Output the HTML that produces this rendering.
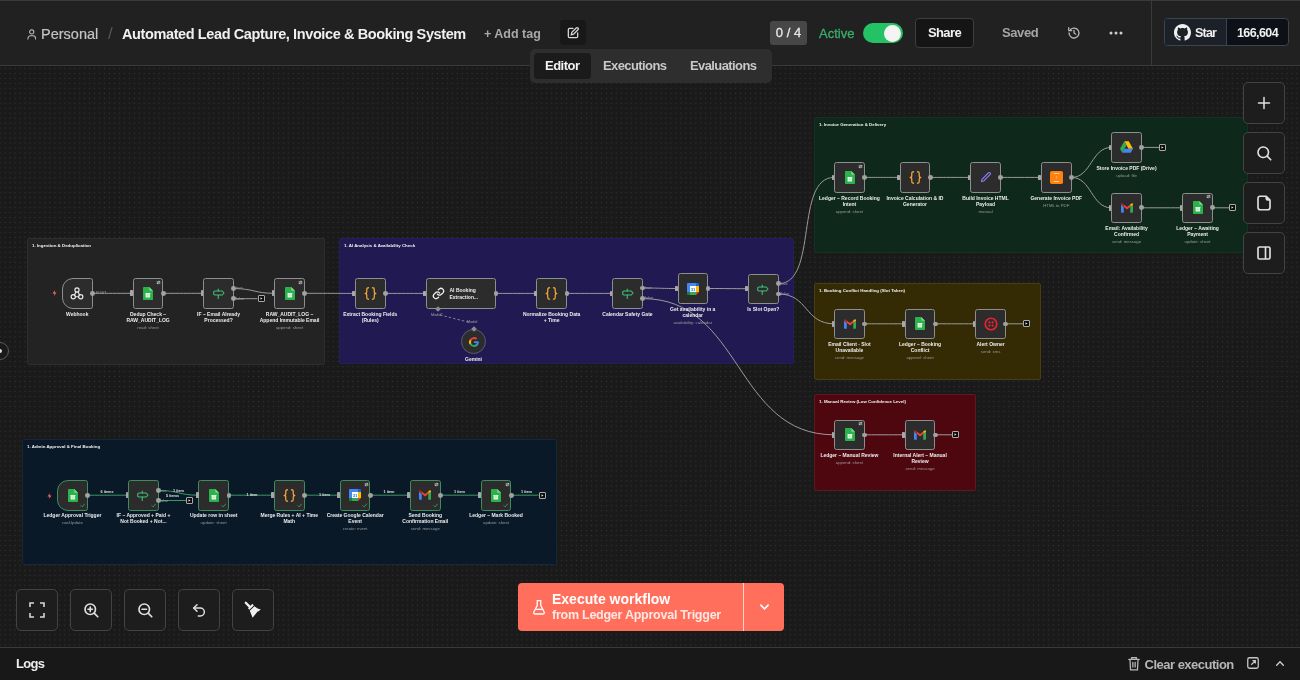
<!DOCTYPE html><html><head><meta charset="utf-8"><style>
*{box-sizing:border-box;margin:0;padding:0}
html,body{width:1300px;height:680px;overflow:hidden;background:#1e1e1e;font-family:'Liberation Sans', sans-serif;color:#e6e6e6}
#root{position:absolute;left:0;top:0;width:1300px;height:680px;will-change:transform}
.abs{position:absolute}
#canvas{position:absolute;left:0;top:66px;width:1300px;height:581px;background-color:#1a1a1a;
 background-image:radial-gradient(circle at 50% 50%,#323232 0,#2e2e2e 0.5px,transparent 1.05px);background-size:4.97px 4.97px;background-position:2.645px 0px}
.grp{position:absolute;border-radius:2px}
.gt{position:absolute;font:bold 4.4px/5px 'Liberation Sans', sans-serif;color:#f2f2f2;white-space:nowrap}
.node{position:absolute;background:#2c2c2c;border:1.2px solid #8e8e8e;border-radius:2.5px}
.node.ok{border-color:#3d8d5e}
.lbl{position:absolute;font:bold 5px/6px 'Liberation Sans', sans-serif;color:#ececec;text-align:center;white-space:nowrap}
.sub{position:absolute;font:4.3px/5px 'Liberation Sans', sans-serif;color:#9a9a9a;text-align:center;white-space:nowrap}
.elab{position:absolute;font:3.8px/4px 'Liberation Sans', sans-serif;color:#a0a0a0;white-space:nowrap}
.btn{position:absolute;width:42px;height:42px;background:#1d1d1d;border:1px solid #434343;border-radius:5px}
</style></head><body><div id="root">
<div class="abs" style="left:0;top:0;width:1300px;height:65px;background:#212121;border-top:1px solid #3a3a3a"></div>
<div class="abs" style="left:0;top:65px;width:1300px;height:1px;background:#3a3a3a"></div>
<div class="abs" style="left:1151px;top:0;width:1px;height:65px;background:#3a3a3a"></div>

<div id="canvas"></div>
<div class="grp" style="left:27px;top:238px;width:298px;height:127px;background:#232323;border:1px solid #2e2e2e"></div>
<div class="gt" style="left:32px;top:242.5px">1. Ingestion &amp; Deduplication</div>
<div class="grp" style="left:339px;top:238px;width:455px;height:126px;background:#211a52;border:1px solid #261e5c"></div>
<div class="gt" style="left:344px;top:242.5px">1. AI Analysis &amp; Availability Check</div>
<div class="grp" style="left:814px;top:117px;width:434px;height:136px;background:#0e291b;border:1px solid #12331f"></div>
<div class="gt" style="left:819px;top:121.5px">1. Invoice Generation &amp; Delivery</div>
<div class="grp" style="left:814px;top:283px;width:227px;height:97px;background:#342a04;border:1px solid #4a3d12"></div>
<div class="gt" style="left:819px;top:287.5px">1. Booking Conflict Handling (Slot Taken)</div>
<div class="grp" style="left:814px;top:394px;width:162px;height:97px;background:#4f070f;border:1px solid #5c1a20"></div>
<div class="gt" style="left:819px;top:398.5px">1. Manual Review (Low Confidence Level)</div>
<div class="grp" style="left:22px;top:439px;width:535px;height:126px;background:#0a1928;border:1px solid #172638"></div>
<div class="gt" style="left:27px;top:443.5px">1. Admin Approval &amp; Final Booking</div>
<svg class="abs" style="left:0;top:0" width="1300" height="680"><path d="M92.5,293.3 C112.65,293.3 112.65,293.3 132.8,293.3" stroke="#9a9a9a" stroke-width="1.0" fill="none"/><path d="M163.3,293.3 C183.3,293.3 183.3,293.3 203.3,293.3" stroke="#9a9a9a" stroke-width="1.0" fill="none"/><path d="M233.8,288.6 C254.05,288.6 254.05,293.3 274.3,293.3" stroke="#9a9a9a" stroke-width="1.0" fill="none"/><path d="M233.8,298.7 L257.5,298.7" stroke="#9a9a9a" stroke-width="1.0" fill="none"/><path d="M304.8,293.3 C329.9,293.3 329.9,293.4 355,293.4" stroke="#9a9a9a" stroke-width="1.0" fill="none"/><path d="M385.5,293.4 C405.5,293.4 405.5,293.4 425.5,293.4" stroke="#9a9a9a" stroke-width="1.0" fill="none"/><path d="M496,293.4 C516.2,293.4 516.2,293.4 536.4,293.4" stroke="#9a9a9a" stroke-width="1.0" fill="none"/><path d="M566.9,293.4 C589.55,293.4 589.55,293.4 612.2,293.4" stroke="#9a9a9a" stroke-width="1.0" fill="none"/><path d="M642.7,288 C662.7,288 657.5,288.5 677.5,288.5" stroke="#9a9a9a" stroke-width="1.0" fill="none"/><path d="M708,288.5 C728.0,288.5 728.0,288.7 748,288.7" stroke="#9a9a9a" stroke-width="1.0" fill="none"/><path d="M440,315 L470,322.5" stroke="#9a98b0" stroke-width="0.8" stroke-dasharray="2.5 2" fill="none"/><path d="M864.7,177.4 C884.7,177.4 879.7,177.4 899.7,177.4" stroke="#9a9a9a" stroke-width="1.0" fill="none"/><path d="M930.2,177.4 C950.25,177.4 950.25,177.4 970.3,177.4" stroke="#9a9a9a" stroke-width="1.0" fill="none"/><path d="M1000.8,177.4 C1020.9,177.4 1020.9,177.4 1041,177.4" stroke="#9a9a9a" stroke-width="1.0" fill="none"/><path d="M1071.5,177.4 C1091.5,177.4 1091.3,147.4 1111.3,147.4" stroke="#9a9a9a" stroke-width="1.0" fill="none"/><path d="M1071.5,177.4 C1091.5,177.4 1091.3,207.8 1111.3,207.8" stroke="#9a9a9a" stroke-width="1.0" fill="none"/><path d="M1141.8,207.8 C1162.05,207.8 1162.05,207.8 1182.3,207.8" stroke="#9a9a9a" stroke-width="1.0" fill="none"/><path d="M1141.8,147.4 L1159,147.4" stroke="#9a9a9a" stroke-width="1.0" fill="none"/><path d="M1212.8,207.8 L1229,207.8" stroke="#9a9a9a" stroke-width="1.0" fill="none"/><path d="M864.7,323.8 C884.75,323.8 884.75,323.8 904.8,323.8" stroke="#9a9a9a" stroke-width="1.0" fill="none"/><path d="M935.3,323.8 C955.3,323.8 955.3,323.8 975.3,323.8" stroke="#9a9a9a" stroke-width="1.0" fill="none"/><path d="M1005.8,323.8 L1023,323.8" stroke="#9a9a9a" stroke-width="1.0" fill="none"/><path d="M864.7,434.8 C884.75,434.8 884.75,434.8 904.8,434.8" stroke="#9a9a9a" stroke-width="1.0" fill="none"/><path d="M935.3,434.8 L952,434.8" stroke="#9a9a9a" stroke-width="1.0" fill="none"/><path d="M778.5,283.7 C818.5,283.7 794.2,177.4 834.2,177.4" stroke="#9a9a9a" stroke-width="1.0" fill="none"/><path d="M778.5,294 C808.5,294 804.2,323.8 834.2,323.8" stroke="#9a9a9a" stroke-width="1.0" fill="none"/><path d="M642.7,298.6 C742.7,298.6 734.2,434.8 834.2,434.8" stroke="#9a9a9a" stroke-width="1.0" fill="none"/><path d="M87.7,495.2 C107.94999999999999,495.2 107.94999999999999,495.2 128.2,495.2" stroke="#3a9a62" stroke-width="1.0" fill="none"/><path d="M158.7,490.5 C178.7,490.5 178.4,495.2 198.4,495.2" stroke="#3a9a62" stroke-width="1.0" fill="none"/><path d="M158.7,500.5 L186,500.5" stroke="#3a9a62" stroke-width="1.0" fill="none"/><path d="M228.9,495.2 C251.45,495.2 251.45,495.2 274,495.2" stroke="#3a9a62" stroke-width="1.0" fill="none"/><path d="M304.5,495.2 C324.5,495.2 319.9,495.2 339.9,495.2" stroke="#3a9a62" stroke-width="1.0" fill="none"/><path d="M370.4,495.2 C390.4,495.2 390,495.2 410,495.2" stroke="#3a9a62" stroke-width="1.0" fill="none"/><path d="M440.5,495.2 C460.65,495.2 460.65,495.2 480.8,495.2" stroke="#3a9a62" stroke-width="1.0" fill="none"/><path d="M511.3,495.2 L538.5,495.2" stroke="#3a9a62" stroke-width="1.0" fill="none"/></svg>
<div class="node" style="left:62px;top:278px;width:30.5px;height:30.5px;border-radius:11px 2.5px 2.5px 11px;"></div><svg style="position:absolute;left:70.2px;top:286.8px" width="14" height="13" viewBox="0 0 28 26" fill="none" stroke="#ececec" stroke-width="2.3" stroke-linecap="round"><circle cx="14" cy="6" r="4.2"/><circle cx="6.5" cy="19.5" r="4.2"/><circle cx="21.5" cy="19.5" r="4.2"/><path d="M12 9.7L9 15.8"/><path d="M10.7 19.5H17.3"/><path d="M19 15.8L16 9.7"/></svg><div class="abs" style="left:90.1px;top:290.9px;width:4.8px;height:4.8px;background:#a2a2a2;border-radius:50%"></div><div class="lbl" style="left:17.25px;top:310.8px;width:120px">Webhook</div><div class="node" style="left:132.8px;top:278px;width:30.5px;height:30.5px;"></div><svg style="position:absolute;left:143.1px;top:286.8px" width="10" height="13" viewBox="0 0 20 26"><path d="M1.5 0H12.5L20 7.5V24.5Q20 26 18.5 26H1.5Q0 26 0 24.5V1.5Q0 0 1.5 0Z" fill="#2ab34b"/><path d="M12.5 0L20 7.5H14Q12.5 7.5 12.5 6Z" fill="#79d690"/><rect x="5.2" y="11.8" width="9" height="9.2" rx="0.5" fill="#e6f7ea"/><path d="M5.2 16.4H14.2M9.7 11.8V21" stroke="#9fdcae" stroke-width="1"/></svg><div class="abs" style="left:130.20000000000002px;top:290.4px;width:2.8px;height:5.6px;background:#a8a8a8;border-radius:0.4px"></div><div class="abs" style="left:160.9px;top:290.9px;width:4.8px;height:4.8px;background:#a2a2a2;border-radius:50%"></div><div class="lbl" style="left:88.05000000000001px;top:310.8px;width:120px">Dedup Check –</div><div class="lbl" style="left:88.05000000000001px;top:316.8px;width:120px">RAW_AUDIT_LOG</div><div class="sub" style="left:88.05000000000001px;top:324.6px;width:120px">read: sheet</div><div class="node" style="left:203.3px;top:278px;width:30.5px;height:30.5px;"></div><svg style="position:absolute;left:212.6px;top:287.2px" width="12" height="12" viewBox="0 0 24 24" fill="none" stroke="#3cc27a" stroke-width="2.2" stroke-linejoin="round" stroke-linecap="round"><path d="M4 8H18.5L22 12L18.5 16H4Q1.5 16 1.5 13.5V10.5Q1.5 8 4 8Z"/><path d="M10.5 4V8M10.5 16V23"/></svg><div class="abs" style="left:200.70000000000002px;top:290.4px;width:2.8px;height:5.6px;background:#a8a8a8;border-radius:0.4px"></div><div class="abs" style="left:231.4px;top:286.2px;width:4.8px;height:4.8px;background:#a2a2a2;border-radius:50%"></div><div class="abs" style="left:231.4px;top:296.3px;width:4.8px;height:4.8px;background:#a2a2a2;border-radius:50%"></div><div class="lbl" style="left:158.55px;top:310.8px;width:120px">IF – Email Already</div><div class="lbl" style="left:158.55px;top:316.8px;width:120px">Processed?</div><div class="node" style="left:274.3px;top:278px;width:30.5px;height:30.5px;"></div><svg style="position:absolute;left:284.6px;top:286.8px" width="10" height="13" viewBox="0 0 20 26"><path d="M1.5 0H12.5L20 7.5V24.5Q20 26 18.5 26H1.5Q0 26 0 24.5V1.5Q0 0 1.5 0Z" fill="#2ab34b"/><path d="M12.5 0L20 7.5H14Q12.5 7.5 12.5 6Z" fill="#79d690"/><rect x="5.2" y="11.8" width="9" height="9.2" rx="0.5" fill="#e6f7ea"/><path d="M5.2 16.4H14.2M9.7 11.8V21" stroke="#9fdcae" stroke-width="1"/></svg><div class="abs" style="left:271.7px;top:290.4px;width:2.8px;height:5.6px;background:#a8a8a8;border-radius:0.4px"></div><div class="abs" style="left:302.40000000000003px;top:290.9px;width:4.8px;height:4.8px;background:#a2a2a2;border-radius:50%"></div><div class="lbl" style="left:229.55px;top:310.8px;width:120px">RAW_AUDIT_LOG –</div><div class="lbl" style="left:229.55px;top:316.8px;width:120px">Append Immutable Email</div><div class="sub" style="left:229.55px;top:324.6px;width:120px">append: sheet</div><div class="abs" style="left:257.5px;top:295.2px;width:7px;height:7px;border:1px solid #a8aca8;border-radius:1px;background:#0c0c0c"></div><svg style="position:absolute;left:259.5px;top:297.2px" width="3" height="3" viewBox="0 0 6 6"><path d="M1 0.5L5 3L1 5.5Z" fill="#ddd"/></svg><div class="node" style="left:355px;top:278.2px;width:30.5px;height:30.5px;"></div><svg style="position:absolute;left:363.8px;top:286.9px" width="13" height="13" viewBox="0 0 26 26" fill="none" stroke="#f0a23a" stroke-width="2.6" stroke-linecap="round" stroke-linejoin="round"><path d="M9 1.5Q5.5 1.5 5.5 5V9.5Q5.5 13 2.5 13Q5.5 13 5.5 16.5V21Q5.5 24.5 9 24.5"/><path d="M17 1.5Q20.5 1.5 20.5 5V9.5Q20.5 13 23.5 13Q20.5 13 20.5 16.5V21Q20.5 24.5 17 24.5"/></svg><div class="abs" style="left:352.4px;top:290.6px;width:2.8px;height:5.6px;background:#a8a8a8;border-radius:0.4px"></div><div class="abs" style="left:383.1px;top:291.1px;width:4.8px;height:4.8px;background:#a2a2a2;border-radius:50%"></div><div class="lbl" style="left:310.25px;top:311.0px;width:120px">Extract Booking Fields</div><div class="lbl" style="left:310.25px;top:317.0px;width:120px">(Rules)</div><div class="node" style="left:425.5px;top:278.2px;width:70.5px;height:30.5px;"></div><svg style="position:absolute;left:431.5px;top:286.9px" width="13" height="13" viewBox="0 0 24 24" fill="none" stroke="#f0f0f0" stroke-width="2.4" stroke-linecap="round"><path d="M10 13a5 5 0 0 0 7.5.5l3-3a5 5 0 0 0-7-7l-1.7 1.7"/><path d="M14 11a5 5 0 0 0-7.5-.5l-3 3a5 5 0 0 0 7 7l1.7-1.7"/></svg><div class="abs" style="left:422.9px;top:290.6px;width:2.8px;height:5.6px;background:#a8a8a8;border-radius:0.4px"></div><div class="abs" style="left:493.6px;top:291.1px;width:4.8px;height:4.8px;background:#a2a2a2;border-radius:50%"></div><div class="lbl" style="left:449.5px;top:287px;text-align:left">AI Booking</div><div class="lbl" style="left:449.5px;top:294px;text-align:left">Extraction...</div><div class="node" style="left:536.4px;top:278.2px;width:30.5px;height:30.5px;"></div><svg style="position:absolute;left:545.1px;top:286.9px" width="13" height="13" viewBox="0 0 26 26" fill="none" stroke="#f0a23a" stroke-width="2.6" stroke-linecap="round" stroke-linejoin="round"><path d="M9 1.5Q5.5 1.5 5.5 5V9.5Q5.5 13 2.5 13Q5.5 13 5.5 16.5V21Q5.5 24.5 9 24.5"/><path d="M17 1.5Q20.5 1.5 20.5 5V9.5Q20.5 13 23.5 13Q20.5 13 20.5 16.5V21Q20.5 24.5 17 24.5"/></svg><div class="abs" style="left:533.8px;top:290.6px;width:2.8px;height:5.6px;background:#a8a8a8;border-radius:0.4px"></div><div class="abs" style="left:564.5px;top:291.1px;width:4.8px;height:4.8px;background:#a2a2a2;border-radius:50%"></div><div class="lbl" style="left:491.65px;top:311.0px;width:120px">Normalize Booking Data</div><div class="lbl" style="left:491.65px;top:317.0px;width:120px">+ Time</div><div class="node" style="left:612.2px;top:278.2px;width:30.5px;height:30.5px;"></div><svg style="position:absolute;left:621.5px;top:287.4px" width="12" height="12" viewBox="0 0 24 24" fill="none" stroke="#3cc27a" stroke-width="2.2" stroke-linejoin="round" stroke-linecap="round"><path d="M4 8H18.5L22 12L18.5 16H4Q1.5 16 1.5 13.5V10.5Q1.5 8 4 8Z"/><path d="M10.5 4V8M10.5 16V23"/></svg><div class="abs" style="left:609.6px;top:290.6px;width:2.8px;height:5.6px;background:#a8a8a8;border-radius:0.4px"></div><div class="abs" style="left:640.3000000000001px;top:285.6px;width:4.8px;height:4.8px;background:#a2a2a2;border-radius:50%"></div><div class="abs" style="left:640.3000000000001px;top:296.2px;width:4.8px;height:4.8px;background:#a2a2a2;border-radius:50%"></div><div class="lbl" style="left:567.45px;top:311.0px;width:120px">Calendar Safety Gate</div><div class="node" style="left:677.5px;top:273.3px;width:30.5px;height:30.5px;"></div><svg style="position:absolute;left:686.8px;top:282.6px" width="12" height="12" viewBox="0 0 24 24"><path d="M2 0H18V6H6V18H0V2Q0 0 2 0Z" fill="#4285f4"/><rect x="18" y="6" width="6" height="12" fill="#fbbc04"/><path d="M18 0H22Q24 0 24 2V6H18Z" fill="#1967d2"/><rect x="6" y="18" width="12" height="6" fill="#34a853"/><path d="M0 18H6V24H2Q0 24 0 22Z" fill="#188038"/><path d="M18 18H24L18 24Z" fill="#ea4335"/><rect x="6" y="6" width="12" height="12" fill="#fff"/><text x="12" y="15.5" font-family="Liberation Sans" font-weight="bold" font-size="8.5" fill="#1a73e8" text-anchor="middle">31</text></svg><div class="abs" style="left:674.9px;top:285.8px;width:2.8px;height:5.6px;background:#a8a8a8;border-radius:0.4px"></div><div class="abs" style="left:705.6px;top:286.2px;width:4.8px;height:4.8px;background:#a2a2a2;border-radius:50%"></div><div class="lbl" style="left:632.75px;top:306.1px;width:120px">Get availability in a</div><div class="lbl" style="left:632.75px;top:312.1px;width:120px">calendar</div><div class="sub" style="left:632.75px;top:319.9px;width:120px">availability: calendar</div><div class="node" style="left:748px;top:273.5px;width:30.5px;height:30.5px;"></div><svg style="position:absolute;left:757.2px;top:282.8px" width="12" height="12" viewBox="0 0 24 24" fill="none" stroke="#3cc27a" stroke-width="2.2" stroke-linejoin="round" stroke-linecap="round"><path d="M4 8H18.5L22 12L18.5 16H4Q1.5 16 1.5 13.5V10.5Q1.5 8 4 8Z"/><path d="M10.5 4V8M10.5 16V23"/></svg><div class="abs" style="left:745.4px;top:285.9px;width:2.8px;height:5.6px;background:#a8a8a8;border-radius:0.4px"></div><div class="abs" style="left:776.1px;top:281.3px;width:4.8px;height:4.8px;background:#a2a2a2;border-radius:50%"></div><div class="abs" style="left:776.1px;top:291.6px;width:4.8px;height:4.8px;background:#a2a2a2;border-radius:50%"></div><div class="lbl" style="left:703.25px;top:306.3px;width:120px">Is Slot Open?</div><div class="abs" style="left:461px;top:329px;width:25px;height:25px;border-radius:50%;background:#2c2c2c;border:1px solid #5a5878"></div><svg style="position:absolute;left:468.5px;top:336.5px" width="10" height="10" viewBox="0 0 24 24"><path d="M23.5 12.3c0-.8-.1-1.6-.2-2.3H12v4.5h6.5a5.5 5.5 0 0 1-2.4 3.6v3h3.9c2.2-2.1 3.5-5.1 3.5-8.8z" fill="#4285f4"/><path d="M12 24c3.2 0 6-1.1 8-2.9l-3.9-3c-1.1.7-2.5 1.2-4.1 1.2-3.1 0-5.8-2.1-6.7-5H1.3v3.1A12 12 0 0 0 12 24z" fill="#34a853"/><path d="M5.3 14.3a7.2 7.2 0 0 1 0-4.6V6.6h-4a12 12 0 0 0 0 10.8z" fill="#fbbc04"/><path d="M12 4.8c1.8 0 3.3.6 4.6 1.8l3.4-3.4A12 12 0 0 0 1.3 6.6l4 3.1c.9-2.8 3.6-4.9 6.7-4.9z" fill="#ea4335"/></svg><div class="lbl" style="left:443.5px;top:356px;width:60px">Gemini</div><div class="abs" style="left:435.8px;top:306.7px;width:4px;height:4px;background:#8c8c8c;transform:rotate(45deg)"></div><div class="abs" style="left:471.5px;top:326.5px;width:4px;height:4px;background:#8c8c8c;transform:rotate(45deg)"></div><div class="elab" style="left:431px;top:312.5px">Model*</div><div class="elab" style="left:467px;top:319.5px">Model</div><div class="node" style="left:834.2px;top:162.2px;width:30.5px;height:30.5px;"></div><svg style="position:absolute;left:844.5px;top:170.9px" width="10" height="13" viewBox="0 0 20 26"><path d="M1.5 0H12.5L20 7.5V24.5Q20 26 18.5 26H1.5Q0 26 0 24.5V1.5Q0 0 1.5 0Z" fill="#2ab34b"/><path d="M12.5 0L20 7.5H14Q12.5 7.5 12.5 6Z" fill="#79d690"/><rect x="5.2" y="11.8" width="9" height="9.2" rx="0.5" fill="#e6f7ea"/><path d="M5.2 16.4H14.2M9.7 11.8V21" stroke="#9fdcae" stroke-width="1"/></svg><div class="abs" style="left:831.6px;top:174.6px;width:2.8px;height:5.6px;background:#a8a8a8;border-radius:0.4px"></div><div class="abs" style="left:862.3000000000001px;top:175.0px;width:4.8px;height:4.8px;background:#a2a2a2;border-radius:50%"></div><div class="lbl" style="left:789.45px;top:195.0px;width:120px">Ledger – Record Booking</div><div class="lbl" style="left:789.45px;top:201.0px;width:120px">Intent</div><div class="sub" style="left:789.45px;top:208.8px;width:120px">append: sheet</div><div class="node" style="left:899.7px;top:162.2px;width:30.5px;height:30.5px;"></div><svg style="position:absolute;left:908.5px;top:170.9px" width="13" height="13" viewBox="0 0 26 26" fill="none" stroke="#f0a23a" stroke-width="2.6" stroke-linecap="round" stroke-linejoin="round"><path d="M9 1.5Q5.5 1.5 5.5 5V9.5Q5.5 13 2.5 13Q5.5 13 5.5 16.5V21Q5.5 24.5 9 24.5"/><path d="M17 1.5Q20.5 1.5 20.5 5V9.5Q20.5 13 23.5 13Q20.5 13 20.5 16.5V21Q20.5 24.5 17 24.5"/></svg><div class="abs" style="left:897.1px;top:174.6px;width:2.8px;height:5.6px;background:#a8a8a8;border-radius:0.4px"></div><div class="abs" style="left:927.8000000000001px;top:175.0px;width:4.8px;height:4.8px;background:#a2a2a2;border-radius:50%"></div><div class="lbl" style="left:854.95px;top:195.0px;width:120px">Invoice Calculation &amp; ID</div><div class="lbl" style="left:854.95px;top:201.0px;width:120px">Generator</div><div class="node" style="left:970.3px;top:162.2px;width:30.5px;height:30.5px;"></div><svg style="position:absolute;left:979.5px;top:171.4px" width="12" height="12" viewBox="0 0 24 24" fill="none" stroke="#8b7cf6" stroke-width="2.2"><path d="M17 3.5a2.5 2.5 0 0 1 3.5 3.5L7.5 20 3 21l1-4.5Z"/></svg><div class="abs" style="left:967.6999999999999px;top:174.6px;width:2.8px;height:5.6px;background:#a8a8a8;border-radius:0.4px"></div><div class="abs" style="left:998.4px;top:175.0px;width:4.8px;height:4.8px;background:#a2a2a2;border-radius:50%"></div><div class="lbl" style="left:925.55px;top:195.0px;width:120px">Build Invoice HTML</div><div class="lbl" style="left:925.55px;top:201.0px;width:120px">Payload</div><div class="sub" style="left:925.55px;top:208.8px;width:120px">manual</div><div class="node" style="left:1041px;top:162.2px;width:30.5px;height:30.5px;"></div><svg style="position:absolute;left:1049.8px;top:170.9px" width="13" height="13" viewBox="0 0 26 26"><rect x="0" y="0" width="26" height="26" rx="3.5" fill="#ff8210"/><path d="M7.5 5H18.5M7.5 21H18.5" stroke="#ffe2b8" stroke-width="1.6"/><path d="M13 10V15" stroke="#ffc58a" stroke-width="1.2"/></svg><div class="abs" style="left:1038.4px;top:174.6px;width:2.8px;height:5.6px;background:#a8a8a8;border-radius:0.4px"></div><div class="abs" style="left:1069.1px;top:175.0px;width:4.8px;height:4.8px;background:#a2a2a2;border-radius:50%"></div><div class="lbl" style="left:996.25px;top:195.0px;width:120px">Generate Invoice PDF</div><div class="sub" style="left:996.25px;top:202.8px;width:120px">HTML to PDF</div><div class="node" style="left:1111.3px;top:132.2px;width:30.5px;height:30.5px;"></div><svg style="position:absolute;left:1120.0px;top:141.4px" width="13" height="12" viewBox="0 0 26 23"><path d="M8.5 0H17.5L26 15H17Z" fill="#fbbc04"/><path d="M8.5 0L0 15L4.5 23L13 8Z" fill="#34a853"/><path d="M4.5 23H21.5L26 15H9Z" fill="#4285f4"/><path d="M13 8L17 15H9Z" fill="#188038" opacity="0"/></svg><div class="abs" style="left:1108.7px;top:144.6px;width:2.8px;height:5.6px;background:#a8a8a8;border-radius:0.4px"></div><div class="abs" style="left:1139.3999999999999px;top:145.0px;width:4.8px;height:4.8px;background:#a2a2a2;border-radius:50%"></div><div class="lbl" style="left:1066.55px;top:165.0px;width:120px">Store Invoice PDF (Drive)</div><div class="sub" style="left:1066.55px;top:172.8px;width:120px">upload: file</div><div class="node" style="left:1111.3px;top:192.6px;width:30.5px;height:30.5px;"></div><svg style="position:absolute;left:1120.5px;top:202.8px" width="12" height="10" viewBox="0 0 24 19"><path d="M0 3.5L0 17.5Q0 19 1.5 19H5.5V8.5L12 13.3L18.5 8.5V19H22.5Q24 19 24 17.5V3.5L12 12.5Z" fill="none"/><path d="M0 3L5.5 7V19H1.5Q0 19 0 17.5Z" fill="#4285f4"/><path d="M18.5 7L24 3V17.5Q24 19 22.5 19H18.5Z" fill="#34a853"/><path d="M18.5 7V2L21 0.5Q24 -1 24 2.5V3Z" fill="#fbbc04"/><path d="M5.5 7V2.5L12 7.5L18.5 2.5V7.5L12 12.5Z" fill="#ea4335"/><path d="M0 3V2.5Q0 -1 3 0.5L5.5 2.5V7Z" fill="#c5221f"/></svg><div class="abs" style="left:1108.7px;top:205.0px;width:2.8px;height:5.6px;background:#a8a8a8;border-radius:0.4px"></div><div class="abs" style="left:1139.3999999999999px;top:205.4px;width:4.8px;height:4.8px;background:#a2a2a2;border-radius:50%"></div><div class="lbl" style="left:1066.55px;top:225.4px;width:120px">Email: Availability</div><div class="lbl" style="left:1066.55px;top:231.4px;width:120px">Confirmed</div><div class="sub" style="left:1066.55px;top:239.2px;width:120px">send: message</div><div class="node" style="left:1182.3px;top:192.6px;width:30.5px;height:30.5px;"></div><svg style="position:absolute;left:1192.5px;top:201.3px" width="10" height="13" viewBox="0 0 20 26"><path d="M1.5 0H12.5L20 7.5V24.5Q20 26 18.5 26H1.5Q0 26 0 24.5V1.5Q0 0 1.5 0Z" fill="#2ab34b"/><path d="M12.5 0L20 7.5H14Q12.5 7.5 12.5 6Z" fill="#79d690"/><rect x="5.2" y="11.8" width="9" height="9.2" rx="0.5" fill="#e6f7ea"/><path d="M5.2 16.4H14.2M9.7 11.8V21" stroke="#9fdcae" stroke-width="1"/></svg><div class="abs" style="left:1179.7px;top:205.0px;width:2.8px;height:5.6px;background:#a8a8a8;border-radius:0.4px"></div><div class="abs" style="left:1210.3999999999999px;top:205.4px;width:4.8px;height:4.8px;background:#a2a2a2;border-radius:50%"></div><div class="lbl" style="left:1137.55px;top:225.4px;width:120px">Ledger – Awaiting</div><div class="lbl" style="left:1137.55px;top:231.4px;width:120px">Payment</div><div class="sub" style="left:1137.55px;top:239.2px;width:120px">update: sheet</div><div class="abs" style="left:1159.0px;top:143.9px;width:7px;height:7px;border:1px solid #a8aca8;border-radius:1px;background:#0c0c0c"></div><svg style="position:absolute;left:1161.0px;top:145.9px" width="3" height="3" viewBox="0 0 6 6"><path d="M1 0.5L5 3L1 5.5Z" fill="#ddd"/></svg><div class="abs" style="left:1229.1px;top:204.1px;width:7px;height:7px;border:1px solid #a8aca8;border-radius:1px;background:#0c0c0c"></div><svg style="position:absolute;left:1231.1px;top:206.1px" width="3" height="3" viewBox="0 0 6 6"><path d="M1 0.5L5 3L1 5.5Z" fill="#ddd"/></svg><div class="node" style="left:834.2px;top:308.6px;width:30.5px;height:30.5px;"></div><svg style="position:absolute;left:843.5px;top:318.9px" width="12" height="10" viewBox="0 0 24 19"><path d="M0 3.5L0 17.5Q0 19 1.5 19H5.5V8.5L12 13.3L18.5 8.5V19H22.5Q24 19 24 17.5V3.5L12 12.5Z" fill="none"/><path d="M0 3L5.5 7V19H1.5Q0 19 0 17.5Z" fill="#4285f4"/><path d="M18.5 7L24 3V17.5Q24 19 22.5 19H18.5Z" fill="#34a853"/><path d="M18.5 7V2L21 0.5Q24 -1 24 2.5V3Z" fill="#fbbc04"/><path d="M5.5 7V2.5L12 7.5L18.5 2.5V7.5L12 12.5Z" fill="#ea4335"/><path d="M0 3V2.5Q0 -1 3 0.5L5.5 2.5V7Z" fill="#c5221f"/></svg><div class="abs" style="left:831.6px;top:321.1px;width:2.8px;height:5.6px;background:#a8a8a8;border-radius:0.4px"></div><div class="abs" style="left:862.3000000000001px;top:321.5px;width:4.8px;height:4.8px;background:#a2a2a2;border-radius:50%"></div><div class="lbl" style="left:789.45px;top:341.4px;width:120px">Email Client - Slot</div><div class="lbl" style="left:789.45px;top:347.4px;width:120px">Unavailable</div><div class="sub" style="left:789.45px;top:355.2px;width:120px">send: message</div><div class="node" style="left:904.8px;top:308.6px;width:30.5px;height:30.5px;"></div><svg style="position:absolute;left:915.0px;top:317.4px" width="10" height="13" viewBox="0 0 20 26"><path d="M1.5 0H12.5L20 7.5V24.5Q20 26 18.5 26H1.5Q0 26 0 24.5V1.5Q0 0 1.5 0Z" fill="#2ab34b"/><path d="M12.5 0L20 7.5H14Q12.5 7.5 12.5 6Z" fill="#79d690"/><rect x="5.2" y="11.8" width="9" height="9.2" rx="0.5" fill="#e6f7ea"/><path d="M5.2 16.4H14.2M9.7 11.8V21" stroke="#9fdcae" stroke-width="1"/></svg><div class="abs" style="left:902.1999999999999px;top:321.1px;width:2.8px;height:5.6px;background:#a8a8a8;border-radius:0.4px"></div><div class="abs" style="left:932.9px;top:321.5px;width:4.8px;height:4.8px;background:#a2a2a2;border-radius:50%"></div><div class="lbl" style="left:860.05px;top:341.4px;width:120px">Ledger – Booking</div><div class="lbl" style="left:860.05px;top:347.4px;width:120px">Conflict</div><div class="sub" style="left:860.05px;top:355.2px;width:120px">append: sheet</div><div class="node" style="left:975.3px;top:308.6px;width:30.5px;height:30.5px;"></div><svg style="position:absolute;left:983.5px;top:316.9px" width="14" height="14" viewBox="0 0 28 28"><circle cx="14" cy="14" r="11.5" fill="none" stroke="#e8222e" stroke-width="3.4"/><circle cx="10.8" cy="10.8" r="2.3" fill="#e8222e"/><circle cx="17.2" cy="10.8" r="2.3" fill="#e8222e"/><circle cx="10.8" cy="17.2" r="2.3" fill="#e8222e"/><circle cx="17.2" cy="17.2" r="2.3" fill="#e8222e"/></svg><div class="abs" style="left:972.6999999999999px;top:321.1px;width:2.8px;height:5.6px;background:#a8a8a8;border-radius:0.4px"></div><div class="abs" style="left:1003.4px;top:321.5px;width:4.8px;height:4.8px;background:#a2a2a2;border-radius:50%"></div><div class="lbl" style="left:930.55px;top:341.4px;width:120px">Alert Owner</div><div class="sub" style="left:930.55px;top:349.2px;width:120px">send: sms</div><div class="abs" style="left:1023.0px;top:320.3px;width:7px;height:7px;border:1px solid #a8aca8;border-radius:1px;background:#0c0c0c"></div><svg style="position:absolute;left:1025.0px;top:322.3px" width="3" height="3" viewBox="0 0 6 6"><path d="M1 0.5L5 3L1 5.5Z" fill="#ddd"/></svg><div class="node" style="left:834.2px;top:419.6px;width:30.5px;height:30.5px;"></div><svg style="position:absolute;left:844.5px;top:428.4px" width="10" height="13" viewBox="0 0 20 26"><path d="M1.5 0H12.5L20 7.5V24.5Q20 26 18.5 26H1.5Q0 26 0 24.5V1.5Q0 0 1.5 0Z" fill="#2ab34b"/><path d="M12.5 0L20 7.5H14Q12.5 7.5 12.5 6Z" fill="#79d690"/><rect x="5.2" y="11.8" width="9" height="9.2" rx="0.5" fill="#e6f7ea"/><path d="M5.2 16.4H14.2M9.7 11.8V21" stroke="#9fdcae" stroke-width="1"/></svg><div class="abs" style="left:831.6px;top:432.1px;width:2.8px;height:5.6px;background:#a8a8a8;border-radius:0.4px"></div><div class="abs" style="left:862.3000000000001px;top:432.5px;width:4.8px;height:4.8px;background:#a2a2a2;border-radius:50%"></div><div class="lbl" style="left:789.45px;top:452.4px;width:120px">Ledger – Manual Review</div><div class="sub" style="left:789.45px;top:460.2px;width:120px">append: sheet</div><div class="node" style="left:904.8px;top:419.6px;width:30.5px;height:30.5px;"></div><svg style="position:absolute;left:914.0px;top:429.9px" width="12" height="10" viewBox="0 0 24 19"><path d="M0 3.5L0 17.5Q0 19 1.5 19H5.5V8.5L12 13.3L18.5 8.5V19H22.5Q24 19 24 17.5V3.5L12 12.5Z" fill="none"/><path d="M0 3L5.5 7V19H1.5Q0 19 0 17.5Z" fill="#4285f4"/><path d="M18.5 7L24 3V17.5Q24 19 22.5 19H18.5Z" fill="#34a853"/><path d="M18.5 7V2L21 0.5Q24 -1 24 2.5V3Z" fill="#fbbc04"/><path d="M5.5 7V2.5L12 7.5L18.5 2.5V7.5L12 12.5Z" fill="#ea4335"/><path d="M0 3V2.5Q0 -1 3 0.5L5.5 2.5V7Z" fill="#c5221f"/></svg><div class="abs" style="left:902.1999999999999px;top:432.1px;width:2.8px;height:5.6px;background:#a8a8a8;border-radius:0.4px"></div><div class="abs" style="left:932.9px;top:432.5px;width:4.8px;height:4.8px;background:#a2a2a2;border-radius:50%"></div><div class="lbl" style="left:860.05px;top:452.4px;width:120px">Internal Alert – Manual</div><div class="lbl" style="left:860.05px;top:458.4px;width:120px">Review</div><div class="sub" style="left:860.05px;top:466.2px;width:120px">send: message</div><div class="abs" style="left:952.0px;top:431.3px;width:7px;height:7px;border:1px solid #a8aca8;border-radius:1px;background:#0c0c0c"></div><svg style="position:absolute;left:954.0px;top:433.3px" width="3" height="3" viewBox="0 0 6 6"><path d="M1 0.5L5 3L1 5.5Z" fill="#ddd"/></svg><div class="node ok" style="left:57.2px;top:480px;width:30.5px;height:30.5px;border-radius:11px 2.5px 2.5px 11px;"></div><svg style="position:absolute;left:67.5px;top:488.8px" width="10" height="13" viewBox="0 0 20 26"><path d="M1.5 0H12.5L20 7.5V24.5Q20 26 18.5 26H1.5Q0 26 0 24.5V1.5Q0 0 1.5 0Z" fill="#2ab34b"/><path d="M12.5 0L20 7.5H14Q12.5 7.5 12.5 6Z" fill="#79d690"/><rect x="5.2" y="11.8" width="9" height="9.2" rx="0.5" fill="#e6f7ea"/><path d="M5.2 16.4H14.2M9.7 11.8V21" stroke="#9fdcae" stroke-width="1"/></svg><div class="abs" style="left:85.3px;top:492.9px;width:4.8px;height:4.8px;background:#a2a2a2;border-radius:50%"></div><svg style="position:absolute;left:79.7px;top:503.0px" width="5.5" height="4.5" viewBox="0 0 10 8"><path d="M1 4L4 7L9 1" stroke="#35a865" stroke-width="1.5" fill="none"/></svg><div class="lbl" style="left:12.450000000000003px;top:512.0px;width:120px">Ledger Approval Trigger</div><div class="sub" style="left:12.450000000000003px;top:519.8px;width:120px">rowUpdate</div><div class="node ok" style="left:128.2px;top:480px;width:30.5px;height:30.5px;"></div><svg style="position:absolute;left:137.4px;top:489.2px" width="12" height="12" viewBox="0 0 24 24" fill="none" stroke="#3cc27a" stroke-width="2.2" stroke-linejoin="round" stroke-linecap="round"><path d="M4 8H18.5L22 12L18.5 16H4Q1.5 16 1.5 13.5V10.5Q1.5 8 4 8Z"/><path d="M10.5 4V8M10.5 16V23"/></svg><div class="abs" style="left:125.6px;top:492.4px;width:2.8px;height:5.6px;background:#a8a8a8;border-radius:0.4px"></div><div class="abs" style="left:156.29999999999998px;top:488.1px;width:4.8px;height:4.8px;background:#a2a2a2;border-radius:50%"></div><div class="abs" style="left:156.29999999999998px;top:498.1px;width:4.8px;height:4.8px;background:#a2a2a2;border-radius:50%"></div><svg style="position:absolute;left:150.7px;top:503.0px" width="5.5" height="4.5" viewBox="0 0 10 8"><path d="M1 4L4 7L9 1" stroke="#35a865" stroke-width="1.5" fill="none"/></svg><div class="lbl" style="left:83.44999999999999px;top:512.0px;width:120px">IF – Approved + Paid +</div><div class="lbl" style="left:83.44999999999999px;top:518.0px;width:120px">Not Booked + Not...</div><div class="node ok" style="left:198.4px;top:480px;width:30.5px;height:30.5px;"></div><svg style="position:absolute;left:208.7px;top:488.8px" width="10" height="13" viewBox="0 0 20 26"><path d="M1.5 0H12.5L20 7.5V24.5Q20 26 18.5 26H1.5Q0 26 0 24.5V1.5Q0 0 1.5 0Z" fill="#2ab34b"/><path d="M12.5 0L20 7.5H14Q12.5 7.5 12.5 6Z" fill="#79d690"/><rect x="5.2" y="11.8" width="9" height="9.2" rx="0.5" fill="#e6f7ea"/><path d="M5.2 16.4H14.2M9.7 11.8V21" stroke="#9fdcae" stroke-width="1"/></svg><div class="abs" style="left:195.8px;top:492.4px;width:2.8px;height:5.6px;background:#a8a8a8;border-radius:0.4px"></div><div class="abs" style="left:226.5px;top:492.9px;width:4.8px;height:4.8px;background:#a2a2a2;border-radius:50%"></div><svg style="position:absolute;left:220.9px;top:503.0px" width="5.5" height="4.5" viewBox="0 0 10 8"><path d="M1 4L4 7L9 1" stroke="#35a865" stroke-width="1.5" fill="none"/></svg><div class="lbl" style="left:153.65px;top:512.0px;width:120px">Update row in sheet</div><div class="sub" style="left:153.65px;top:519.8px;width:120px">update: sheet</div><div class="node ok" style="left:274px;top:480px;width:30.5px;height:30.5px;"></div><svg style="position:absolute;left:282.8px;top:488.8px" width="13" height="13" viewBox="0 0 26 26" fill="none" stroke="#f0a23a" stroke-width="2.6" stroke-linecap="round" stroke-linejoin="round"><path d="M9 1.5Q5.5 1.5 5.5 5V9.5Q5.5 13 2.5 13Q5.5 13 5.5 16.5V21Q5.5 24.5 9 24.5"/><path d="M17 1.5Q20.5 1.5 20.5 5V9.5Q20.5 13 23.5 13Q20.5 13 20.5 16.5V21Q20.5 24.5 17 24.5"/></svg><div class="abs" style="left:271.4px;top:492.4px;width:2.8px;height:5.6px;background:#a8a8a8;border-radius:0.4px"></div><div class="abs" style="left:302.1px;top:492.9px;width:4.8px;height:4.8px;background:#a2a2a2;border-radius:50%"></div><svg style="position:absolute;left:296.5px;top:503.0px" width="5.5" height="4.5" viewBox="0 0 10 8"><path d="M1 4L4 7L9 1" stroke="#35a865" stroke-width="1.5" fill="none"/></svg><div class="lbl" style="left:229.25px;top:512.0px;width:120px">Merge Rules + AI + Time</div><div class="lbl" style="left:229.25px;top:518.0px;width:120px">Math</div><div class="node ok" style="left:339.9px;top:480px;width:30.5px;height:30.5px;"></div><svg style="position:absolute;left:349.1px;top:489.2px" width="12" height="12" viewBox="0 0 24 24"><path d="M2 0H18V6H6V18H0V2Q0 0 2 0Z" fill="#4285f4"/><rect x="18" y="6" width="6" height="12" fill="#fbbc04"/><path d="M18 0H22Q24 0 24 2V6H18Z" fill="#1967d2"/><rect x="6" y="18" width="12" height="6" fill="#34a853"/><path d="M0 18H6V24H2Q0 24 0 22Z" fill="#188038"/><path d="M18 18H24L18 24Z" fill="#ea4335"/><rect x="6" y="6" width="12" height="12" fill="#fff"/><text x="12" y="15.5" font-family="Liberation Sans" font-weight="bold" font-size="8.5" fill="#1a73e8" text-anchor="middle">31</text></svg><div class="abs" style="left:337.29999999999995px;top:492.4px;width:2.8px;height:5.6px;background:#a8a8a8;border-radius:0.4px"></div><div class="abs" style="left:368.0px;top:492.9px;width:4.8px;height:4.8px;background:#a2a2a2;border-radius:50%"></div><svg style="position:absolute;left:362.4px;top:503.0px" width="5.5" height="4.5" viewBox="0 0 10 8"><path d="M1 4L4 7L9 1" stroke="#35a865" stroke-width="1.5" fill="none"/></svg><div class="lbl" style="left:295.15px;top:512.0px;width:120px">Create Google Calendar</div><div class="lbl" style="left:295.15px;top:518.0px;width:120px">Event</div><div class="sub" style="left:295.15px;top:525.8px;width:120px">create: event</div><div class="node ok" style="left:410px;top:480px;width:30.5px;height:30.5px;"></div><svg style="position:absolute;left:419.2px;top:490.2px" width="12" height="10" viewBox="0 0 24 19"><path d="M0 3.5L0 17.5Q0 19 1.5 19H5.5V8.5L12 13.3L18.5 8.5V19H22.5Q24 19 24 17.5V3.5L12 12.5Z" fill="none"/><path d="M0 3L5.5 7V19H1.5Q0 19 0 17.5Z" fill="#4285f4"/><path d="M18.5 7L24 3V17.5Q24 19 22.5 19H18.5Z" fill="#34a853"/><path d="M18.5 7V2L21 0.5Q24 -1 24 2.5V3Z" fill="#fbbc04"/><path d="M5.5 7V2.5L12 7.5L18.5 2.5V7.5L12 12.5Z" fill="#ea4335"/><path d="M0 3V2.5Q0 -1 3 0.5L5.5 2.5V7Z" fill="#c5221f"/></svg><div class="abs" style="left:407.4px;top:492.4px;width:2.8px;height:5.6px;background:#a8a8a8;border-radius:0.4px"></div><div class="abs" style="left:438.1px;top:492.9px;width:4.8px;height:4.8px;background:#a2a2a2;border-radius:50%"></div><svg style="position:absolute;left:432.5px;top:503.0px" width="5.5" height="4.5" viewBox="0 0 10 8"><path d="M1 4L4 7L9 1" stroke="#35a865" stroke-width="1.5" fill="none"/></svg><div class="lbl" style="left:365.25px;top:512.0px;width:120px">Send Booking</div><div class="lbl" style="left:365.25px;top:518.0px;width:120px">Confirmation Email</div><div class="sub" style="left:365.25px;top:525.8px;width:120px">send: message</div><div class="node ok" style="left:480.8px;top:480px;width:30.5px;height:30.5px;"></div><svg style="position:absolute;left:491.1px;top:488.8px" width="10" height="13" viewBox="0 0 20 26"><path d="M1.5 0H12.5L20 7.5V24.5Q20 26 18.5 26H1.5Q0 26 0 24.5V1.5Q0 0 1.5 0Z" fill="#2ab34b"/><path d="M12.5 0L20 7.5H14Q12.5 7.5 12.5 6Z" fill="#79d690"/><rect x="5.2" y="11.8" width="9" height="9.2" rx="0.5" fill="#e6f7ea"/><path d="M5.2 16.4H14.2M9.7 11.8V21" stroke="#9fdcae" stroke-width="1"/></svg><div class="abs" style="left:478.2px;top:492.4px;width:2.8px;height:5.6px;background:#a8a8a8;border-radius:0.4px"></div><div class="abs" style="left:508.90000000000003px;top:492.9px;width:4.8px;height:4.8px;background:#a2a2a2;border-radius:50%"></div><svg style="position:absolute;left:503.3px;top:503.0px" width="5.5" height="4.5" viewBox="0 0 10 8"><path d="M1 4L4 7L9 1" stroke="#35a865" stroke-width="1.5" fill="none"/></svg><div class="lbl" style="left:436.05px;top:512.0px;width:120px">Ledger – Mark Booked</div><div class="sub" style="left:436.05px;top:519.8px;width:120px">update: sheet</div><div class="abs" style="left:185.8px;top:496.8px;width:7px;height:7px;border:1px solid #a8aca8;border-radius:1px;background:#0c0c0c"></div><svg style="position:absolute;left:187.8px;top:498.8px" width="3" height="3" viewBox="0 0 6 6"><path d="M1 0.5L5 3L1 5.5Z" fill="#ddd"/></svg><div class="abs" style="left:538.5px;top:491.7px;width:7px;height:7px;border:1px solid #a8aca8;border-radius:1px;background:#0c0c0c"></div><svg style="position:absolute;left:540.5px;top:493.7px" width="3" height="3" viewBox="0 0 6 6"><path d="M1 0.5L5 3L1 5.5Z" fill="#ddd"/></svg><div class="elab" style="left:100.5px;top:490px;color:#e0e0e0;font-weight:bold">6 items</div><div class="elab" style="left:173px;top:489px;color:#e0e0e0;font-weight:bold">1 item</div><div class="elab" style="left:166px;top:494px;color:#e0e0e0;font-weight:bold">5 items</div><div class="elab" style="left:246.5px;top:493px;color:#e0e0e0;font-weight:bold">1 item</div><div class="elab" style="left:319px;top:493px;color:#e0e0e0;font-weight:bold">1 item</div><div class="elab" style="left:383.5px;top:490px;color:#e0e0e0;font-weight:bold">1 item</div><div class="elab" style="left:454px;top:490px;color:#e0e0e0;font-weight:bold">1 item</div><div class="elab" style="left:521px;top:490px;color:#e0e0e0;font-weight:bold">1 item</div><div class="elab" style="left:96px;top:291px">POST</div><div class="elab" style="left:236px;top:286px">true</div><div class="elab" style="left:236px;top:296.5px">false</div><div class="elab" style="left:645px;top:285.5px">true</div><div class="elab" style="left:645px;top:296px">false</div><div class="elab" style="left:781px;top:281.5px">true</div><div class="elab" style="left:781px;top:292px">false</div><div class="elab" style="left:160px;top:488.5px">true</div><div class="elab" style="left:160px;top:498.5px">false</div><svg style="position:absolute;left:52.3px;top:290px" width="5" height="6" viewBox="0 0 10 12"><path d="M6 0L1 7H5L4 12L9 5H5Z" fill="#ff6d5a"/></svg><svg style="position:absolute;left:47.0px;top:492.5px" width="5" height="6" viewBox="0 0 10 12"><path d="M6 0L1 7H5L4 12L9 5H5Z" fill="#ff6d5a"/></svg><svg style="position:absolute;left:156.0px;top:279.5px" width="5" height="5" viewBox="0 0 8 8" fill="none" stroke="#e8e8e8" stroke-width="1.2"><path d="M1 3H6.5L4.8 1.2M7 5H1.5L3.2 6.8"/></svg><svg style="position:absolute;left:297.5px;top:279.5px" width="5" height="5" viewBox="0 0 8 8" fill="none" stroke="#e8e8e8" stroke-width="1.2"><path d="M1 3H6.5L4.8 1.2M7 5H1.5L3.2 6.8"/></svg><svg style="position:absolute;left:857.5px;top:164.0px" width="5" height="5" viewBox="0 0 8 8" fill="none" stroke="#e8e8e8" stroke-width="1.2"><path d="M1 3H6.5L4.8 1.2M7 5H1.5L3.2 6.8"/></svg><svg style="position:absolute;left:1205.5px;top:194.0px" width="5" height="5" viewBox="0 0 8 8" fill="none" stroke="#e8e8e8" stroke-width="1.2"><path d="M1 3H6.5L4.8 1.2M7 5H1.5L3.2 6.8"/></svg><svg style="position:absolute;left:857.5px;top:421.0px" width="5" height="5" viewBox="0 0 8 8" fill="none" stroke="#e8e8e8" stroke-width="1.2"><path d="M1 3H6.5L4.8 1.2M7 5H1.5L3.2 6.8"/></svg><svg style="position:absolute;left:363.5px;top:481.5px" width="5" height="5" viewBox="0 0 8 8" fill="none" stroke="#e8e8e8" stroke-width="1.2"><path d="M1 3H6.5L4.8 1.2M7 5H1.5L3.2 6.8"/></svg><svg style="position:absolute;left:433.5px;top:481.5px" width="5" height="5" viewBox="0 0 8 8" fill="none" stroke="#e8e8e8" stroke-width="1.2"><path d="M1 3H6.5L4.8 1.2M7 5H1.5L3.2 6.8"/></svg><svg style="position:absolute;left:504.5px;top:481.5px" width="5" height="5" viewBox="0 0 8 8" fill="none" stroke="#e8e8e8" stroke-width="1.2"><path d="M1 3H6.5L4.8 1.2M7 5H1.5L3.2 6.8"/></svg>

<svg class="abs" style="left:26.5px;top:28.5px" width="9.5" height="11" viewBox="0 0 22 26" fill="none" stroke="#c4c4c4" stroke-width="2.4"><circle cx="11" cy="7" r="5"/><path d="M2 25V22a6 6 0 0 1 6-6h6a6 6 0 0 1 6 6v3"/></svg>
<div class="abs" style="left:41px;top:24px;font:14.5px/20px 'Liberation Sans', sans-serif;-webkit-text-stroke:0.2px #c4c4c4;color:#c4c4c4">Personal</div>
<div class="abs" style="left:108px;top:24px;font:17px/20px 'Liberation Sans', sans-serif;color:#555">/</div>
<div class="abs" style="left:122px;top:24px;font:bold 14.5px/20px 'Liberation Sans', sans-serif;letter-spacing:-0.39px;color:#f0f0f0">Automated Lead Capture, Invoice &amp; Booking System</div>
<div class="abs" style="left:484px;top:25px;font:bold 12.5px/18px 'Liberation Sans', sans-serif;color:#a8a8a8">+ Add tag</div>
<div class="abs" style="left:560px;top:20px;width:26px;height:25px;background:#181818;border-radius:4px"></div>
<svg class="abs" style="left:566px;top:25.5px" width="14" height="14" viewBox="0 0 24 24" fill="none" stroke="#d8d8d8" stroke-width="2.2" stroke-linecap="round"><path d="M12 4H6a2 2 0 0 0-2 2v12a2 2 0 0 0 2 2h12a2 2 0 0 0 2-2v-6"/><path d="M17.5 3.5a2.1 2.1 0 0 1 3 3L13 14l-4 1 1-4Z"/></svg>
<div class="abs" style="left:530px;top:49px;width:242px;height:34px;background:#2e2e2e;border-radius:5px"></div>
<div class="abs" style="left:534px;top:53px;width:57px;height:26px;background:#1b1b1b;border-radius:4px"></div>
<div class="abs" style="left:545px;top:58px;font:bold 13px/16px 'Liberation Sans', sans-serif;letter-spacing:-0.5px;color:#f2f2f2">Editor</div>
<div class="abs" style="left:603px;top:58px;font:bold 13px/16px 'Liberation Sans', sans-serif;letter-spacing:-0.6px;color:#c8c8c8">Executions</div>
<div class="abs" style="left:690px;top:58px;font:bold 13px/16px 'Liberation Sans', sans-serif;letter-spacing:-0.6px;color:#c8c8c8">Evaluations</div>

<div class="abs" style="left:770px;top:21px;width:37px;height:24px;background:#474747;border-radius:3px;font:13px/24px 'Liberation Sans', sans-serif;-webkit-text-stroke:0.3px #e8e8e8;color:#e8e8e8;text-align:center">0 / 4</div>
<div class="abs" style="left:819px;top:26px;font:13px/16px 'Liberation Sans', sans-serif;-webkit-text-stroke:0.3px #3aae6a;color:#3aae6a">Active</div>
<div class="abs" style="left:863px;top:23px;width:40px;height:20px;background:#25c265;border-radius:10px"></div>
<div class="abs" style="left:884px;top:24.5px;width:17px;height:17px;background:#f4f4f4;border-radius:50%"></div>
<div class="abs" style="left:915px;top:18px;width:59px;height:30px;background:#151515;border:1px solid #3e3e3e;border-radius:4px;font:bold 13px/28px 'Liberation Sans', sans-serif;letter-spacing:-0.6px;color:#f2f2f2;text-align:center">Share</div>
<div class="abs" style="left:1002px;top:25px;font:bold 13px/16px 'Liberation Sans', sans-serif;letter-spacing:-0.4px;color:#a5a5a5">Saved</div>
<svg class="abs" style="left:1067px;top:25.5px" width="14" height="14" viewBox="0 0 24 24" fill="none" stroke="#b8b8b8" stroke-width="2.2" stroke-linecap="round"><path d="M3.5 12a8.5 8.5 0 1 0 2.5-6"/><path d="M3 3v5h5"/><path d="M12 7.5V12l3 2"/></svg>
<svg class="abs" style="left:1109px;top:31px" width="14" height="4" viewBox="0 0 14 4"><circle cx="2" cy="2" r="1.5" fill="#cfcfcf"/><circle cx="7" cy="2" r="1.5" fill="#cfcfcf"/><circle cx="12" cy="2" r="1.5" fill="#cfcfcf"/></svg>

<div class="abs" style="left:1164px;top:18px;width:125px;height:28px;background:#0d1117;border:1px solid #3d444d;border-radius:4px;overflow:hidden">
 <div class="abs" style="left:0;top:0;width:62px;height:26px;background:#1c2129;border-right:1px solid #3d444d"></div>
</div>
<svg class="abs" style="left:1174px;top:23.5px" width="17" height="17" viewBox="0 0 16 16"><path fill="#f0f0f0" d="M8 0C3.58 0 0 3.58 0 8c0 3.54 2.29 6.53 5.47 7.59.4.07.55-.17.55-.38 0-.19-.01-.82-.01-1.49-2.01.37-2.53-.49-2.69-.94-.09-.23-.48-.94-.82-1.13-.28-.15-.68-.52-.01-.53.63-.01 1.08.58 1.23.82.72 1.21 1.87.87 2.33.66.07-.52.28-.87.51-1.07-1.78-.2-3.64-.89-3.64-3.95 0-.87.31-1.590.82-2.15-.08-.2-.36-1.02.08-2.12 0 0 .67-.21 2.2.82.64-.18 1.32-.27 2-.27.68 0 1.36.09 2 .27 1.53-1.04 2.2-.82 2.2-.82.44 1.1.16 1.92.08 2.12.51.56.82 1.27.82 2.15 0 3.07-1.87 3.75-3.65 3.95.29.25.54.73.54 1.48 0 1.07-.01 1.93-.01 2.2 0 .21.15.46.55.38A8.013 8.013 0 0016 8c0-4.42-3.58-8-8-8z"/></svg>
<div class="abs" style="left:1195px;top:25px;font:bold 12.5px/16px 'Liberation Sans', sans-serif;letter-spacing:-0.8px;color:#f0f0f0">Star</div>
<div class="abs" style="left:1226px;top:25px;width:63px;font:bold 12.5px/16px 'Liberation Sans', sans-serif;letter-spacing:-0.6px;color:#f0f0f0;text-align:center">166,604</div>

<div class="btn" style="left:1243px;top:82px"></div>
<div class="btn" style="left:1243px;top:132px"></div>
<div class="btn" style="left:1243px;top:182px"></div>
<div class="btn" style="left:1243px;top:232px"></div>
<svg class="abs" style="left:1257px;top:96px" width="14" height="14" viewBox="0 0 14 14" stroke="#e0e0e0" stroke-width="1.5" stroke-linecap="round"><path d="M7 1.5V12.5M1.5 7H12.5"/></svg>
<svg class="abs" style="left:1255px;top:144px" width="18" height="18" viewBox="0 0 24 24" fill="none" stroke="#e0e0e0" stroke-width="2.2" stroke-linecap="round"><circle cx="11" cy="11" r="7"/><path d="M16.5 16.5L21 21"/></svg>
<svg class="abs" style="left:1255px;top:194px" width="18" height="18" viewBox="0 0 24 24" fill="none" stroke="#e0e0e0" stroke-width="2.2" stroke-linejoin="round"><path d="M6 3H15L20 8V18a3 3 0 0 1-3 3H7a3 3 0 0 1-3-3V6a3 3 0 0 1 2-3Z"/><path d="M15 3V6a2 2 0 0 0 2 2H20" fill="#e0e0e0"/></svg>
<svg class="abs" style="left:1255px;top:244px" width="18" height="18" viewBox="0 0 24 24" fill="none" stroke="#e0e0e0" stroke-width="2.2"><rect x="4" y="4" width="16" height="16" rx="2"/><path d="M14 4V20"/></svg>

<div class="btn" style="left:16px;top:589px"></div>
<div class="btn" style="left:70px;top:589px"></div>
<div class="btn" style="left:124px;top:589px"></div>
<div class="btn" style="left:178px;top:589px"></div>
<div class="btn" style="left:232px;top:589px"></div>
<svg class="abs" style="left:29px;top:602px" width="16" height="16" viewBox="0 0 16 16" fill="none" stroke="#d8d8d8" stroke-width="1.6"><path d="M1 5V1H5M11 1H15V5M15 11V15H11M5 15H1V11"/></svg>
<svg class="abs" style="left:82px;top:601px" width="18" height="18" viewBox="0 0 24 24" fill="none" stroke="#e0e0e0" stroke-width="2.2" stroke-linecap="round"><circle cx="11" cy="11" r="7"/><path d="M16.5 16.5L21 21M11 8V14M8 11H14"/></svg>
<svg class="abs" style="left:136px;top:601px" width="18" height="18" viewBox="0 0 24 24" fill="none" stroke="#e0e0e0" stroke-width="2.2" stroke-linecap="round"><circle cx="11" cy="11" r="7"/><path d="M16.5 16.5L21 21M8 11H14"/></svg>
<svg class="abs" style="left:191px;top:602px" width="16" height="16" viewBox="0 0 24 24" fill="none" stroke="#e0e0e0" stroke-width="2.2" stroke-linecap="round" stroke-linejoin="round"><path d="M9 14L4 9L9 4"/><path d="M4 9H14a6 6 0 0 1 0 12H11"/></svg>
<svg class="abs" style="left:240px;top:597px" width="26" height="26" viewBox="0 0 26 26"><path d="M5.8 5.8L9.6 9.6" stroke="#f0f0f0" stroke-width="2.3" stroke-linecap="round"/><path d="M8 11.2L12.4 6.8L13.8 8.4L9.4 12.8Z" fill="#f0f0f0"/><path d="M9.8 13.8L14.4 9.2L17.6 11.6L20.8 12.4L18.2 14.4L17.6 14.4L12.6 20.8Z" fill="#f0f0f0"/></svg>

<div class="abs" style="left:518px;top:583px;width:266px;height:48px;background:#ff6f5c;border-radius:4px"></div>
<div class="abs" style="left:743px;top:583px;width:1px;height:48px;background:#ffd6cc"></div>
<svg class="abs" style="left:531.5px;top:598.5px" width="14" height="16" viewBox="0 0 24 26" fill="none" stroke="#fff" stroke-width="2.2" stroke-linejoin="round"><path d="M8 2H16M9 2V10L3 22a2 2 0 0 0 2 3H19a2 2 0 0 0 2-3L15 10V2"/><path d="M6 17H18"/></svg>
<div class="abs" style="left:552px;top:590.5px;font:bold 14px/17px 'Liberation Sans', sans-serif;color:#fff">Execute workflow</div>
<div class="abs" style="left:552px;top:607px;font:bold 12.5px/16px 'Liberation Sans', sans-serif;letter-spacing:-0.25px;color:#ffe8e4">from Ledger Approval Trigger</div>
<svg class="abs" style="left:758.5px;top:603px" width="11" height="8" viewBox="0 0 12 8" fill="none" stroke="#fff" stroke-width="1.8" stroke-linecap="round"><path d="M2 2L6 6L10 2"/></svg>

<div class="abs" style="left:0;top:647px;width:1300px;height:33px;background:#181818;border-top:1px solid #3a3a3a"></div>
<div class="abs" style="left:16px;top:656px;font:bold 13px/16px 'Liberation Sans', sans-serif;letter-spacing:-0.7px;color:#ededed">Logs</div>
<svg class="abs" style="left:1127px;top:656px" width="14" height="15" viewBox="0 0 24 26" fill="none" stroke="#b8b8b8" stroke-width="2.2" stroke-linecap="round"><path d="M3 6H21M8 6V3H16V6M5 6L6 24H18L19 6M10 11V19M14 11V19"/></svg>
<div class="abs" style="left:1144.5px;top:656.5px;font:bold 13px/16px 'Liberation Sans', sans-serif;letter-spacing:-0.5px;color:#b5b5b5">Clear execution</div>
<svg class="abs" style="left:1246px;top:656px" width="14" height="14" viewBox="0 0 24 24" fill="none" stroke="#c8c8c8" stroke-width="2.2"><rect x="3" y="3" width="18" height="18" rx="3"/><path d="M9 15L16 8M11 8H16V13" /></svg>
<svg class="abs" style="left:1275px;top:660px" width="10" height="7" viewBox="0 0 12 8" fill="none" stroke="#c8c8c8" stroke-width="1.8" stroke-linecap="round"><path d="M2 6L6 2L10 6"/></svg>

<div class="abs" style="left:-9px;top:342px;width:18px;height:18px;border:1px solid #5a5a5a;border-radius:50%;background:#1a1a1a"></div><div class="abs" style="left:-2px;top:349px;width:4px;height:4px;border-radius:50%;background:#ddd"></div>
</div></body></html>
